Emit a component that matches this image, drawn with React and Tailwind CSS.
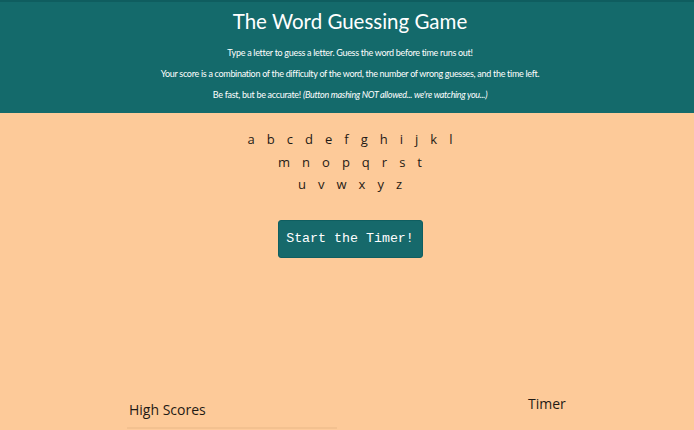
import React from "react";

const rows = [
  ["a","b","c","d","e","f","g","h","i","j","k","l"],
  ["m","n","o","p","q","r","s","t"],
  ["u","v","w","x","y","z"],
];

export default function App() {
  return (
    <div className="w-[694px] h-[430px] overflow-hidden bg-[#fdca99] font-['Lato',sans-serif]">
      <header className="h-[113px] bg-[#146a6b] border-t-2 border-[#0f5d5f] text-white flex flex-col items-center pl-[6px]">
        <h1 className="mt-[6px] text-[20.5px] leading-[26px] font-normal">The Word Guessing Game</h1>
        <p className="mt-[13px] text-[9px] leading-[12px] tracking-[-0.3px]">Type a letter to guess a letter. Guess the word before time runs out!</p>
        <p className="mt-[9px] text-[9px] leading-[12px] tracking-[-0.3px]">Your score is a combination of the difficulty of the word, the number of wrong guesses, and the time left.</p>
        <p className="mt-[9px] text-[9px] leading-[12px] tracking-[-0.3px]">Be fast, but be accurate! <em>(Button mashing NOT allowed... we're watching you...)</em></p>
      </header>
      <div className="flex flex-col items-center pl-[6px] pt-[15px] font-['Open_Sans',sans-serif] text-[13px] text-[#1f1a15]">
        {rows.map((r, i) => (
          <div key={i} className="flex gap-[12px] leading-[22.5px]">
            {r.map((l) => (
              <span key={l}>{l}</span>
            ))}
          </div>
        ))}
        <button className="mt-[24px] w-[145px] h-[38px] rounded-[3px] bg-[#16696b] border border-[#0f5e60] text-white font-['Liberation_Mono',monospace] text-[13.3px]">
          Start the Timer!
        </button>
      </div>
      <div className="flex mt-[139px] font-['Open_Sans',sans-serif] text-[#1f1a15]">
        <div className="ml-[127px] w-[210px]">
          <div className="text-[14px] leading-[20px] mt-[3px] pl-[2px]">High Scores</div>
          <div className="mt-[7px] border-t-2 border-[#f3c190]"></div>
        </div>
        <div className="ml-[191px] text-[14px] leading-[20px] mt-[-3px]">Timer</div>
      </div>
    </div>
  );
}
